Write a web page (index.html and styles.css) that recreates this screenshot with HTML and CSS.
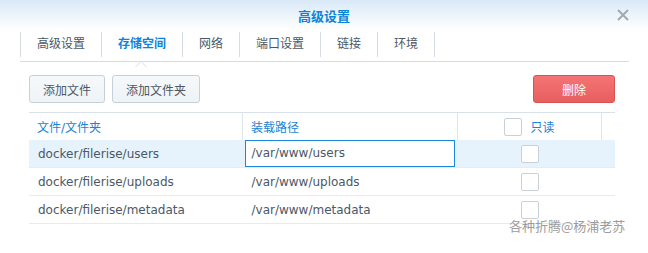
FILE: index.html
```html
<!DOCTYPE html>
<html>
<head>
  <title>高级设置</title>
  <link rel="stylesheet" href="styles.css">
</head>
<body>

  <div class="window">
    <div class="titlebar">
      <span class="title">高级设置</span>
      <svg class="close" width="12" height="12" viewBox="0 0 12 12">
        <path d="M1 1 L11 11 M11 1 L1 11" stroke="#a3a9ae" stroke-width="2"/>
      </svg>
    </div>

    <div class="tabs">
      <div class="tab">高级设置</div>
      <div class="tab active">存储空间</div>
      <div class="tab">网络</div>
      <div class="tab">端口设置</div>
      <div class="tab">链接</div>
      <div class="tab">环境</div>
    </div>
    <div class="tabline"></div>

    <div class="content">
      <div class="toolbar">
        <button class="btn">添加文件</button>
        <button class="btn">添加文件夹</button>
        <span class="spacer"></span>
        <button class="btn danger">删除</button>
      </div>

      <table class="grid">
        <thead>
          <tr>
            <th class="c1">文件/文件夹</th>
            <th class="c2">装载路径</th>
            <th class="c3"><span class="check"></span>只读</th>
            <th class="c4"></th>
          </tr>
        </thead>
        <tbody>
          <tr class="selected">
            <td>docker/filerise/users</td>
            <td class="editing"><div class="edit">/var/www/users</div></td>
            <td class="center"><span class="check"></span></td>
            <td></td>
          </tr>
          <tr>
            <td>docker/filerise/uploads</td>
            <td>/var/www/uploads</td>
            <td class="center"><span class="check"></span></td>
            <td></td>
          </tr>
          <tr>
            <td>docker/filerise/metadata</td>
            <td>/var/www/metadata</td>
            <td class="center"><span class="check"></span></td>
            <td></td>
          </tr>
        </tbody>
      </table>
    </div>

    <div class="watermark">各种折腾@杨浦老苏</div>
  </div>

</body>
</html>
```

FILE: styles.css
```css
body {
  margin: 0;
  background: #fff;
  font-family: "DejaVu Sans", "Noto Sans CJK SC", sans-serif;
  font-size: 12px;
  color: #4b5866;
}
.window {
  position: relative;
  width: 648px;
  height: 253px;
}
.titlebar {
  height: 30px;
  display: flex;
  align-items: center;
  justify-content: center;
  background: linear-gradient(#d9e9f8, #ffffff);
  position: relative;
}
.title {
  font-size: 13px;
  font-weight: bold;
  color: #0e84d8;
}
.close {
  position: absolute;
  right: 19px;
  top: 9px;
}
.tabs {
  display: flex;
  margin-left: 20px;
  margin-top: 2px;
  height: 25px;
}
.tab {
  border-left: 1px solid #d6dce2;
  padding: 0 16px;
  line-height: 25px;
  color: #4b5866;
}
.tab:last-child {
  border-right: 1px solid #d6dce2;
}
.tab.active {
  color: #0e84d8;
  font-weight: bold;
}
.tabline {
  position: relative;
  margin: 4px 19px 0 20px;
  height: 0;
  border-top: 1px solid #d8dde2;
}
.tabline::before {
  content: "";
  position: absolute;
  left: 115px;
  top: -7px;
  border: 6px solid transparent;
  border-bottom-color: #d8dde2;
}
.tabline::after {
  content: "";
  position: absolute;
  left: 116px;
  top: -5px;
  border: 5px solid transparent;
  border-bottom-color: #fff;
}
.content {
  padding: 0 33px 0 29px;
}
.toolbar {
  display: flex;
  gap: 7px;
  margin-top: 13px;
}
.spacer {
  flex: 1;
}
.btn {
  height: 28px;
  padding: 0 13px;
  font-family: inherit;
  font-size: 12px;
  color: #4b5866;
  background: linear-gradient(#f6f9fb, #eef3f7);
  border: 1px solid #c6d0d9;
  border-radius: 3px;
}
.btn.danger {
  width: 82px;
  color: #fff;
  background: linear-gradient(#f57474, #e85f5f);
  border-color: #d85252;
}
.grid {
  width: 100%;
  margin-top: 9px;
  border-collapse: collapse;
  table-layout: fixed;
}
.grid th {
  height: 27px;
  padding: 0 0 0 8px;
  text-align: left;
  font-weight: normal;
  color: #1a84d6;
  border-top: 1px solid #d8e1ea;
  border-right: 1px solid #dde5ed;
}
.grid th.c1 { width: 205px; }
.grid th.c2 { width: 206px; }
.grid th.c3 { width: 143px; text-align: center; padding-left: 0; }
.grid th.c4 { border-right: none; }
.grid th .check {
  vertical-align: middle;
  margin: -3px 8px 0 0;
}
.grid td {
  height: 27px;
  padding: 0 0 0 9px;
  border-bottom: 1px solid #e8eaed;
  white-space: nowrap;
}
.grid tr.selected td {
  background: #e6f3fd;
}
.grid td.editing {
  padding: 0 3px 0 2px;
}
.edit {
  height: 25px;
  line-height: 25px;
  padding-left: 6px;
  background: #fff;
  border: 1px solid #1a86de;
}
.grid td.center {
  text-align: center;
  padding: 0;
}
.check {
  display: inline-block;
  width: 16px;
  height: 16px;
  border: 1px solid #c8d1da;
  border-radius: 2px;
  background: #fff;
  vertical-align: middle;
}
.watermark {
  position: absolute;
  left: 509px;
  top: 216px;
  font-family: "Noto Sans CJK SC", sans-serif;
  font-size: 13px;
  color: #9c9c9c;
}
```
